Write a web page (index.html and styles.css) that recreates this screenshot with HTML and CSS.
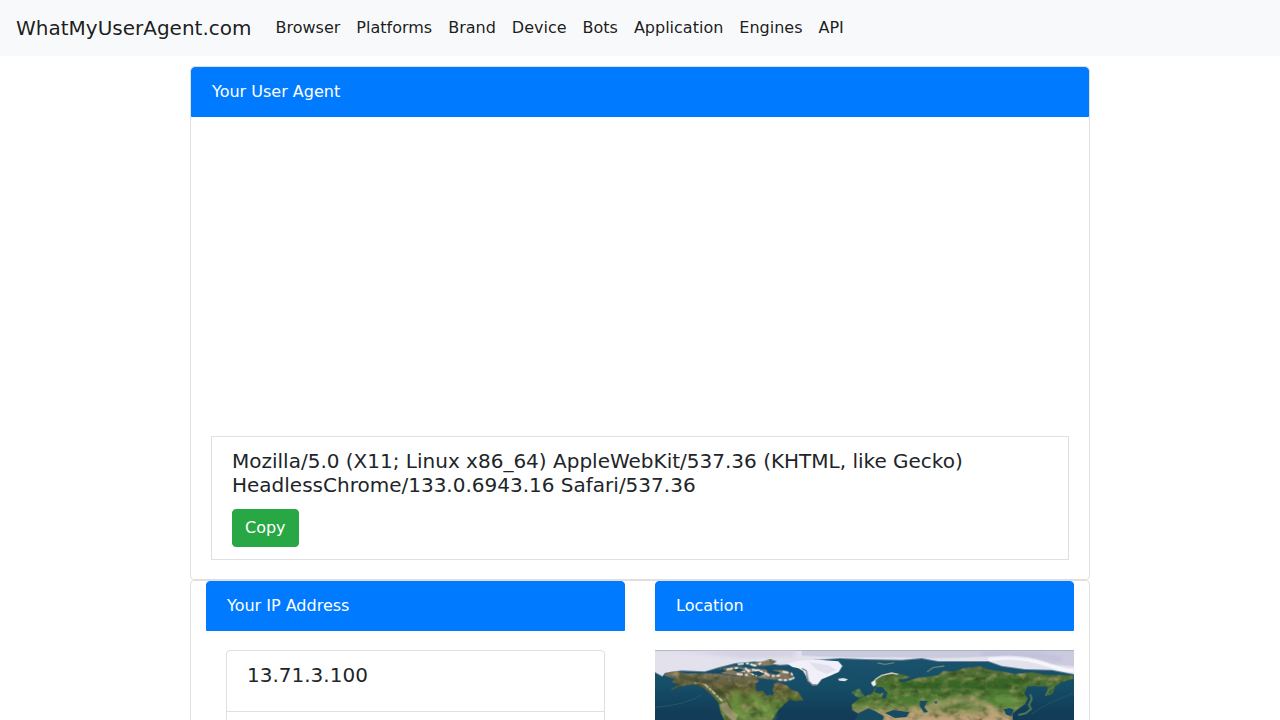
FILE: index.html
```html
<!DOCTYPE html>
<html lang="en">
<head>
<meta charset="utf-8">
<meta name="viewport" content="width=device-width, initial-scale=1">
<title>WhatMyUserAgent.com</title>
<link rel="stylesheet" href="styles.css">
</head>
<body>
<nav class="navbar">
  <a class="brand" href="#">WhatMyUserAgent.com</a>
  <ul class="nav-list">
    <li><a class="nav-link" href="#">Browser</a></li>
    <li><a class="nav-link" href="#">Platforms</a></li>
    <li><a class="nav-link" href="#">Brand</a></li>
    <li><a class="nav-link" href="#">Device</a></li>
    <li><a class="nav-link" href="#">Bots</a></li>
    <li><a class="nav-link" href="#">Application</a></li>
    <li><a class="nav-link" href="#">Engines</a></li>
    <li><a class="nav-link" href="#">API</a></li>
  </ul>
</nav>
<main class="page">
  <section class="card">
    <div class="card-header">Your User Agent</div>
    <div class="card-body">
      <div class="banner-slot"></div>
      <div class="agent-box">
        <h5 class="value">Mozilla/5.0 (X11; Linux x86_64) AppleWebKit/537.36 (KHTML, like Gecko) HeadlessChrome/133.0.6943.16 Safari/537.36</h5>
        <button class="copy-button" type="button">Copy</button>
      </div>
    </div>
  </section>
  <section class="card columns">
    <div class="column">
      <div class="card-header">Your IP Address</div>
      <div class="card-body">
        <ul class="list">
          <li class="list-item"><h5 class="value">13.71.3.100</h5></li>
          <li class="list-item"></li>
        </ul>
      </div>
    </div>
    <div class="column">
      <div class="card-header">Location</div>
      <svg class="map" viewBox="0 0 1257 630" role="img" aria-label="World map">
        <defs>
          <linearGradient id="sea" x1="0" y1="0" x2="0" y2="1">
            <stop offset="0" stop-color="#1c5570"/><stop offset=".18" stop-color="#154c66"/><stop offset=".3" stop-color="#123c58"/><stop offset="1" stop-color="#0d3150"/>
          </linearGradient>
          <linearGradient id="america" x1="0" y1="0" x2="0" y2="1">
            <stop offset="0" stop-color="#77715a"/><stop offset=".3" stop-color="#5e5b36"/><stop offset=".6" stop-color="#5a7c35"/><stop offset="1" stop-color="#6f8c48"/>
          </linearGradient>
          <linearGradient id="asia" x1="0" y1="0" x2="0" y2="1">
            <stop offset="0" stop-color="#5a6f3c"/><stop offset=".25" stop-color="#47702f"/><stop offset=".6" stop-color="#4f7c34"/><stop offset=".74" stop-color="#8f925a"/><stop offset=".86" stop-color="#c0a37b"/><stop offset="1" stop-color="#cbab8a"/>
          </linearGradient>
          <filter id="soft" x="-20%" y="-20%" width="140%" height="140%"><feGaussianBlur stdDeviation="7"/></filter>
          <filter id="edge"><feGaussianBlur stdDeviation="1.5"/></filter>
          <filter id="grain" x="0" y="0" width="100%" height="100%" color-interpolation-filters="sRGB">
            <feTurbulence type="fractalNoise" baseFrequency=".035 .05" numOctaves="4" seed="6" result="n"/>
            <feColorMatrix in="n" type="matrix" values="0 0 0 0 .16  0 0 0 0 .22  0 0 0 0 .1  1.6 0 0 0 -.75" result="dark"/>
            <feComposite in="dark" in2="SourceAlpha" operator="in" result="d"/>
            <feColorMatrix in="n" type="matrix" values="0 0 0 0 .74  0 0 0 0 .66  0 0 0 0 .46  0 1.8 0 0 -.88" result="light"/>
            <feComposite in="light" in2="SourceAlpha" operator="in" result="l"/>
            <feMerge result="m"><feMergeNode in="SourceGraphic"/><feMergeNode in="d"/><feMergeNode in="l"/></feMerge>
            <feGaussianBlur in="m" stdDeviation="1"/>
          </filter>
          <clipPath id="americaClip"><path d="M0 66L40 70L60 66L92 65L150 68L195 56L240 50L320 46L390 60L425 76L440 105L448 152L400 215H215L200 180L180 140L140 100L90 102L60 118L85 98L48 84Z"/></clipPath>
          <clipPath id="asiaClip"><path d="M600 126L655 110L668 85L712 68L745 84L762 82L790 78L850 68L920 60L975 48L1040 62L1140 68L1215 66L1257 76V86L1225 100L1190 125L1172 138L1177 116L1140 106L1116 118L1120 150L1085 172L1066 192L1040 210H600Z"/></clipPath>
        </defs>
        <rect width="1257" height="630" fill="url(#sea)"/>
        <g filter="url(#edge)">
          <path d="M0 172Q90 165 140 135" stroke="#2a6375" stroke-width="3" fill="none" opacity=".7"/>
          <path d="M1257 130Q1190 150 1130 192" stroke="#2c6175" stroke-width="3" fill="none" opacity=".7"/>
          <path d="M0 0H1257V73L1190 60L1110 58L1040 48L1000 34H850L800 25L740 30L630 28L555 25L480 30L420 42L375 45L300 35L240 40L190 53L150 65L80 62L30 69L22 79L0 67Z" fill="#e2e1ec"/>
          <path d="M440 0H1257V48Q1100 36 1010 18Q850 28 720 21Q570 25 440 16Z" fill="#cbcade"/>
          <path d="M0 2L130 7L260 22L420 18V2Z" fill="#d2cfdf" filter="url(#soft)"/>
          <path d="M1000 28Q1090 14 1170 42T1257 58" stroke="#f6f6fc" stroke-width="12" fill="none"/>
          <path d="M980 12Q1100 2 1220 30" stroke="#b9b8d6" stroke-width="8" fill="none" filter="url(#soft)"/>
        </g>
        <g filter="url(#grain)">
          <path fill="url(#america)" d="M26 75L45 66L74 65L92 71L150 69L195 72L235 78L300 79L314 95L300 112L306 124L322 122L335 137L350 133L356 102L370 96L396 107L410 119L430 126L445 150L422 153L405 148L388 162L370 180L350 210L330 225L240 230L210 215L198 190L190 158L172 137L148 114L118 104L95 105L73 110L45 122L72 102L49 97L60 88Z"/>
          <path fill="#817560" d="M194 56L240 48L286 55L330 58L395 61L415 74L409 91L384 94L350 88L315 84L278 81L235 75L200 71Z"/>
          <path fill="#897e67" d="M275 43L320 35L345 28L365 34L350 45L305 50Z"/>
          <path fill="url(#asia)" d="M614 145L650 131L665 108L652 94L674 80L706 68L735 72L767 80L755 85L730 88L738 98L757 94L790 83L850 76L865 63L900 64L925 55L975 49L1005 60L1040 64L1080 72L1130 67L1180 75L1257 75V86L1225 94L1200 109L1193 130L1178 136L1177 109L1118 108L1108 130L1118 145L1110 162L1090 176L1072 190L1074 230H615L610 190L592 180L590 164Z"/>
          <path fill="#59824c" d="M598 137L601 120L613 115L621 128L629 139L610 142ZM588 127L600 122L597 134Z"/>
        </g>
        <g clip-path="url(#americaClip)" filter="url(#edge)">
          <path d="M70 80L160 96L205 137L230 190" stroke="#353d20" stroke-width="13" fill="none" opacity=".45"/>
          <path d="M250 120Q225 165 265 208M285 130Q325 160 355 208" stroke="#7aa447" stroke-width="22" fill="none" opacity=".6" filter="url(#soft)"/>
          <path d="M205 160Q215 190 245 205" stroke="#c5a894" stroke-width="23" fill="none" opacity=".55"/>
          <path d="M118 100L150 104L175 127L201 153" stroke="#dedbd8" stroke-width="4" fill="none" stroke-dasharray="15 4 8 3"/>
        </g>
        <g clip-path="url(#asiaClip)" filter="url(#edge)">
          <path d="M735 110H950L1100 90" stroke="#28581e" stroke-width="28" fill="none" opacity=".5" filter="url(#soft)"/>
          <path d="M760 190L850 162L930 146L995 163L1030 202" stroke="#d8b58f" stroke-width="20" fill="none" opacity=".5" filter="url(#soft)"/>
          <path d="M870 178L900 168L935 176" stroke="#547532" stroke-width="9" fill="none" opacity=".6"/>
          <path d="M1020 140L1060 155L1080 175" stroke="#61923f" stroke-width="34" fill="none" opacity=".8" filter="url(#soft)"/>
        </g>
        <g fill="none" stroke="#f5f4f7" stroke-width="5" filter="url(#edge)" stroke-dasharray="18 7 9 5">
          <path d="M215 58L245 54L270 64L295 59L325 66L345 78L375 77M248 43L278 40L300 47L320 39M383 65L409 70L416 84L398 91L370 89"/>
          <path d="M245 72L278 75M270 54L288 70L305 77M308 58L328 76"/>
        </g>
        <g fill="#174b61">
          <path d="M300 101L320 91L342 94L357 103L348 116L358 130L351 137L334 125L308 115Z"/>
          <path d="M230 60L255 55L270 61L249 66ZM285 67L312 64L329 72L313 79ZM330 54L350 53L356 63L377 67L365 74L341 69ZM151 64L190 63L201 55L214 64L195 69Z"/>
          <path d="M663 112L681 111L692 123L675 132L658 126ZM680 143L688 121L697 127L692 147ZM690 189L715 180L763 187L755 201L720 204ZM795 152L817 153L808 171L819 186L807 188L794 168ZM610 190L640 175L661 184L687 199L683 210H600ZM836 155L847 154L844 163ZM1046 178L1065 174L1077 180L1068 198L1053 194Z"/>
        </g>
        <g filter="url(#edge)">
          <path fill="#f1f0fa" d="M397 41L430 32L490 29L550 34L562 48L551 66L524 78L500 88L486 106L473 105L458 93L453 78L444 63L430 55L412 51Z"/>
          <path fill="#d8d6e5" d="M462 36L520 46L544 60L514 72L483 58Z" opacity=".6"/>
          <path d="M441 55L454 63L460 93L473 105L486 104" fill="none" stroke="#8f858a" stroke-width="4"/>
          <path fill="#dde2df" d="M549 86L565 84L579 88L570 94L552 92Z"/>
          <path d="M650 103L663 87L680 76L710 69L729 73" fill="none" stroke="#d0cbc0" stroke-width="4"/>
          <path fill="#eef1ef" d="M648 97L661 91L663 104L655 110Z"/>
          <path d="M816 66L834 53L868 48M668 39L690 43L718 38" fill="none" stroke="#688075" stroke-width="4"/>
          <path d="M1172 137L1182 118L1197 108M1126 133L1130 147L1122 165L1128 177L1112 190L1090 195" fill="none" stroke="#54794f" stroke-width="6"/>
        </g>
      </svg>
    </div>
  </section>
</main>
</body>
</html>
```
FILE: styles.css
```css
*, *::before, *::after { box-sizing: border-box; }

body {
  margin: 0;
  background: #fff;
  color: #212529;
  font-family: "DejaVu Sans", sans-serif;
  font-size: 16px;
  line-height: 24px;
}

.navbar {
  display: flex;
  flex-wrap: wrap;
  align-items: center;
  padding: 8px 16px;
  background: #f8f9fa;
}

.brand {
  margin-right: 16px;
  color: rgba(0, 0, 0, .9);
  font-size: 20px;
  line-height: 30px;
  text-decoration: none;
}

.nav-list {
  display: flex;
  flex-wrap: wrap;
  margin: 0;
  padding: 0;
  list-style: none;
}

.nav-link {
  display: block;
  padding: 8px;
  color: rgba(0, 0, 0, .9);
  text-decoration: none;
}

.page {
  max-width: 900px;
  margin: 10px auto 0;
}

.card {
  border: 1px solid #dfdfdf;
  border-radius: 4px;
}

.card-header {
  padding: 12px 20px;
  border: 1px solid #007bff;
  border-radius: 4px 4px 0 0;
  background: #007bff;
  color: #fff;
}

.card-body { padding: 19px 20px; }

.banner-slot { height: 300px; }

.agent-box {
  padding: 12px 20px;
  border: 1px solid #dfdfdf;
}

.value {
  margin: 0 0 12px;
  font-size: 20px;
  font-weight: 400;
  line-height: 24px;
}

.copy-button {
  display: block;
  padding: 6px 12px;
  border: 1px solid #28a745;
  border-radius: 4px;
  background: #28a745;
  color: #fff;
  font: inherit;
}

.columns {
  display: grid;
  grid-template-columns: 1fr 1fr;
  gap: 30px;
  padding: 0 15px;
}

.list {
  margin: 0;
  padding: 0;
  border: 1px solid #dfdfdf;
  border-radius: 4px;
  list-style: none;
}

.list-item {
  min-height: 60px;
  padding: 12px 20px;
}

.list-item + .list-item { border-top: 1px solid #dfdfdf; }

.map {
  display: block;
  width: 100%;
  margin: 19px 0;
}
```
